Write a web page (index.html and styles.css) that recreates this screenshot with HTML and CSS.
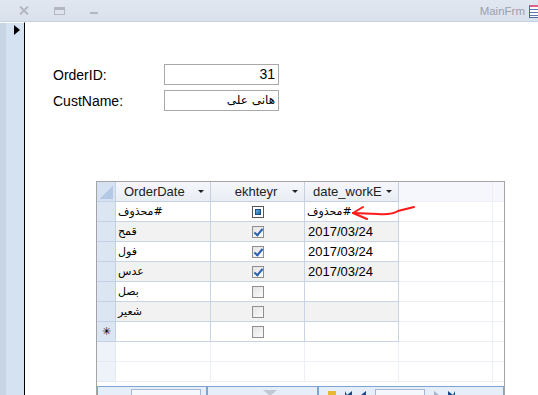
FILE: index.html
```html
<!DOCTYPE html>
<html lang="en">
<head>
  <meta charset="UTF-8">
  <title>MainFrm</title>
  <link rel="stylesheet" href="styles.css">
</head>
<body>
  <header class="titlebar">
    <div class="caption-buttons">
      <svg width="10" height="9" viewBox="0 0 10 9"><path d="M1 0.5 L9 8.5 M9 0.5 L1 8.5" stroke="#b3b8c0" stroke-width="2"/></svg>
      <svg width="11" height="8" viewBox="0 0 11 8"><rect x="0.5" y="0.5" width="10" height="7" fill="none" stroke="#b3b8c0"/><rect x="0.5" y="0.5" width="10" height="2.5" fill="#b3b8c0"/></svg>
      <svg width="8" height="3" viewBox="0 0 8 3"><rect x="0" y="0" width="8" height="2" fill="#b3b8c0"/></svg>
    </div>
    <div class="title">MainFrm<span class="form-icon"></span></div>
  </header>

  <div class="window-body">
    <aside class="record-strip"><span class="current-mark"></span></aside>

    <main class="detail">
      <div class="fields">
        <div class="field">
          <label>OrderID:</label>
          <div class="box num">31</div>
        </div>
        <div class="field">
          <label>CustName:</label>
          <div class="box rtl">هانی علی</div>
        </div>
      </div>

      <div class="sheet">
        <div class="row head">
          <div class="sel corner"><span></span></div>
          <div class="cell">OrderDate<i class="drop"></i></div>
          <div class="cell center">ekhteyr<i class="drop"></i></div>
          <div class="cell">date_workE<i class="drop"></i></div>
          <div class="cell blank"></div>
          <div class="cell blank"></div>
        </div>
        <div class="row">
          <div class="sel"></div>
          <div class="cell ar"><span dir="rtl">#محذوف</span></div>
          <div class="cell center"><span class="check mixed"></span></div>
          <div class="cell ar"><span dir="rtl">#محذوف</span></div>
          <div class="cell blank"></div>
          <div class="cell blank"></div>
        </div>
        <div class="row alt">
          <div class="sel"></div>
          <div class="cell ar">قمح</div>
          <div class="cell center"><span class="check on"></span></div>
          <div class="cell">2017/03/24</div>
          <div class="cell blank"></div>
          <div class="cell blank"></div>
        </div>
        <div class="row">
          <div class="sel"></div>
          <div class="cell ar">فول</div>
          <div class="cell center"><span class="check on"></span></div>
          <div class="cell">2017/03/24</div>
          <div class="cell blank"></div>
          <div class="cell blank"></div>
        </div>
        <div class="row alt">
          <div class="sel"></div>
          <div class="cell ar">عدس</div>
          <div class="cell center"><span class="check on"></span></div>
          <div class="cell">2017/03/24</div>
          <div class="cell blank"></div>
          <div class="cell blank"></div>
        </div>
        <div class="row">
          <div class="sel"></div>
          <div class="cell ar">بصل</div>
          <div class="cell center"><span class="check"></span></div>
          <div class="cell"></div>
          <div class="cell blank"></div>
          <div class="cell blank"></div>
        </div>
        <div class="row alt">
          <div class="sel"></div>
          <div class="cell ar">شعير</div>
          <div class="cell center"><span class="check"></span></div>
          <div class="cell"></div>
          <div class="cell blank"></div>
          <div class="cell blank"></div>
        </div>
        <div class="row">
          <div class="sel new">✳</div>
          <div class="cell"></div>
          <div class="cell center"><span class="check"></span></div>
          <div class="cell"></div>
          <div class="cell blank"></div>
          <div class="cell blank"></div>
        </div>
        <div class="row empty">
          <div class="sel"></div>
          <div class="cell"></div>
          <div class="cell"></div>
          <div class="cell"></div>
          <div class="cell"></div>
          <div class="cell"></div>
        </div>
        <div class="row empty">
          <div class="sel"></div>
          <div class="cell"></div>
          <div class="cell"></div>
          <div class="cell"></div>
          <div class="cell"></div>
          <div class="cell"></div>
        </div>

        <div class="navbar">
          <div class="nav-part search"><span class="nav-box"></span></div>
          <div class="nav-part filter"><span class="funnel"></span></div>
          <div class="nav-part records">
            <span class="nav-ico new-rec"></span>
            <span class="nav-ico first"></span>
            <span class="nav-ico prev"></span>
            <span class="nav-box small"></span>
            <span class="nav-ico next"></span>
            <span class="nav-ico last"></span>
          </div>
        </div>

        <svg class="scribble" width="70" height="20" viewBox="0 0 70 20">
          <path d="M1 8 L26 9 Q40 10 46 6 L62 2" fill="none" stroke="#ff1a1a" stroke-width="2" stroke-linecap="round"/>
          <path d="M11 2 L1 8 L15 14" fill="none" stroke="#ff1a1a" stroke-width="2" stroke-linecap="round" stroke-linejoin="round"/>
        </svg>
      </div>
    </main>
  </div>
</body>
</html>
```

FILE: styles.css
```css
* { box-sizing: border-box; }
body {
  margin: 0;
  height: 395px;
  overflow: hidden;
  background: #fff;
  font-family: "Liberation Sans", Arial, sans-serif;
  color: #000;
}
.titlebar {
  height: 22px;
  display: flex;
  align-items: center;
  justify-content: space-between;
  background: linear-gradient(to bottom, #e1e7f0, #d9e1ec);
  border-bottom: 1px solid #c6d2e1;
}
.caption-buttons {
  display: flex;
  align-items: center;
  gap: 25px;
  padding-left: 19px;
}
.caption-buttons svg:last-child { margin-top: 5px; }
.title {
  display: flex;
  align-items: center;
  gap: 4px;
  font-size: 11.5px;
  color: #9ba1aa;
  padding-top: 1px;
}
.form-icon {
  width: 9px;
  height: 13px;
  background: #fff repeating-linear-gradient(to bottom, #fff 0 2px, #5a78a8 2px 3px);
  border: 1px solid #4d6b9a;
  border-top: 2px solid #e0608c;
  border-right: none;
}
.window-body {
  display: flex;
  height: 373px;
}
.record-strip {
  width: 25px;
  background: linear-gradient(to right, #c6d4e4 6px, #d4e2f1 6px);
  border-right: 1px solid #000;
  border-top: 1px solid #fff;
}
.current-mark {
  display: block;
  width: 0;
  height: 0;
  margin: 2px 0 0 14px;
  border-top: 5px solid transparent;
  border-bottom: 5px solid transparent;
  border-left: 6px solid #000;
}
.detail {
  flex: 1;
  padding: 42px 0 0 28px;
}
.fields {
  display: flex;
  flex-direction: column;
  gap: 5px;
}
.field {
  display: flex;
  align-items: center;
}
.field label {
  width: 111px;
  font-size: 14px;
}
.box {
  width: 115px;
  height: 21px;
  border: 1px solid #a9a9a9;
  font-size: 14px;
  line-height: 19px;
  padding: 0 3px;
  text-align: right;
}
.box.rtl {
  font-family: "DejaVu Sans", sans-serif;
  font-size: 12px;
  direction: rtl;
  text-align: right;
}

.sheet {
  position: relative;
  margin: 70px 0 0 43px;
  width: 409px;
  border: 1px solid #a4a4a4;
  border-bottom: none;
  font-size: 13px;
}
.row {
  display: grid;
  grid-template-columns: 19px 95px 94px 94px 94px 1fr;
  height: 20px;
  background: #fff;
}
.row.alt .cell:not(.blank) { background: #f2f2f2; }
.cell {
  border-right: 1px solid #c8d4e4;
  border-bottom: 1px solid #c8d4e4;
  padding: 0 3px;
  line-height: 19px;
  white-space: nowrap;
  overflow: hidden;
}
.cell.center { display: flex; justify-content: center; align-items: center; }
.cell.ar { font-family: "DejaVu Sans", sans-serif; font-size: 11px; padding-left: 2px; }
.cell.blank, .row.empty .cell { border-color: #eceff6; }
.row .cell:last-child { border-right: none; }
.sel {
  background: #dce6f3;
  border-right: 1px solid #c3d1e4;
  border-bottom: 1px solid #c3d1e4;
}
.sel.new { font-size: 11px; text-align: center; line-height: 19px; }
.row.empty .sel { background: #eef3fa; border-color: #e3e9f2; }

.row.head .cell {
  position: relative;
  background: linear-gradient(to bottom, #f5f7fb, #e9edf4);
  border-right-color: #c5cfdd;
  border-bottom-color: #c5cfdd;
  padding-left: 8px;
  color: #222;
}
.row.head .cell.center { padding-left: 0; }
.row.head .cell.blank { background: #f5f7fd; border-color: #eceff6; }
.corner {
  position: relative;
  background: #d6e2f2;
}
.corner span {
  position: absolute;
  right: 2px;
  bottom: 2px;
  width: 13px;
  height: 13px;
  background: linear-gradient(135deg, transparent 50%, #b4c9e6 50%);
}
.drop {
  position: absolute;
  right: 6px;
  top: 8px;
  width: 0;
  height: 0;
  border-left: 3px solid transparent;
  border-right: 3px solid transparent;
  border-top: 3px solid #222;
}
.check {
  width: 12px;
  height: 12px;
  border: 1px solid #8e8f8f;
  background: linear-gradient(135deg, #e4e4e4, #fafafa);
  position: relative;
}
.check.on::after {
  content: "";
  position: absolute;
  left: 3px;
  top: 0;
  width: 3px;
  height: 7px;
  border-right: 2px solid #2b5fb4;
  border-bottom: 2px solid #2b5fb4;
  transform: rotate(40deg);
}
.check.mixed { border-color: #555; background: #fff; }
.check.mixed::after {
  content: "";
  position: absolute;
  inset: 2px;
  background: linear-gradient(135deg, #6aaede, #1e6aae);
  border: 1px solid #1f4f80;
}

.navbar {
  display: flex;
  height: 12px;
  margin-top: 4px;
  border: 1px solid #7ea4d2;
  border-bottom: none;
  background: #e6eef9;
  overflow: hidden;
}
.nav-part {
  display: flex;
  align-items: flex-start;
  border-right: 2px solid #7ea4d2;
  padding-top: 2px;
}
.nav-part.search { width: 110px; justify-content: flex-end; padding-right: 5px; }
.nav-part.filter { width: 111px; justify-content: flex-end; padding-right: 40px; }
.nav-part.records { flex: 1; border-right: none; gap: 9px; padding-left: 9px; padding-top: 4px; }
.nav-box {
  display: block;
  width: 70px;
  height: 12px;
  background: #f4f7fc;
  border: 1px solid #a6b8d1;
}
.nav-part.records .nav-box { margin-top: -2px; }
.nav-box.small { width: 50px; }
.funnel {
  width: 0;
  height: 0;
  margin-top: 1px;
  border-left: 7px solid transparent;
  border-right: 7px solid transparent;
  border-top: 6px solid #c0c8d4;
}
.nav-ico {
  width: 0;
  height: 0;
  border-top: 4px solid transparent;
  border-bottom: 4px solid transparent;
}
.nav-ico.new-rec { width: 8px; height: 6px; border: none; background: #e8b830; }
.nav-ico.first, .nav-ico.prev { border-right: 5px solid #1d4a8c; }
.nav-ico.first { border-left: 2px solid #1d4a8c; }
.nav-ico.next { border-left: 5px solid #a8b6cc; }
.nav-ico.last { border-left: 5px solid #1d4a8c; border-right: 2px solid #1d4a8c; }

.scribble {
  position: absolute;
  left: 255px;
  top: 23px;
}
```
